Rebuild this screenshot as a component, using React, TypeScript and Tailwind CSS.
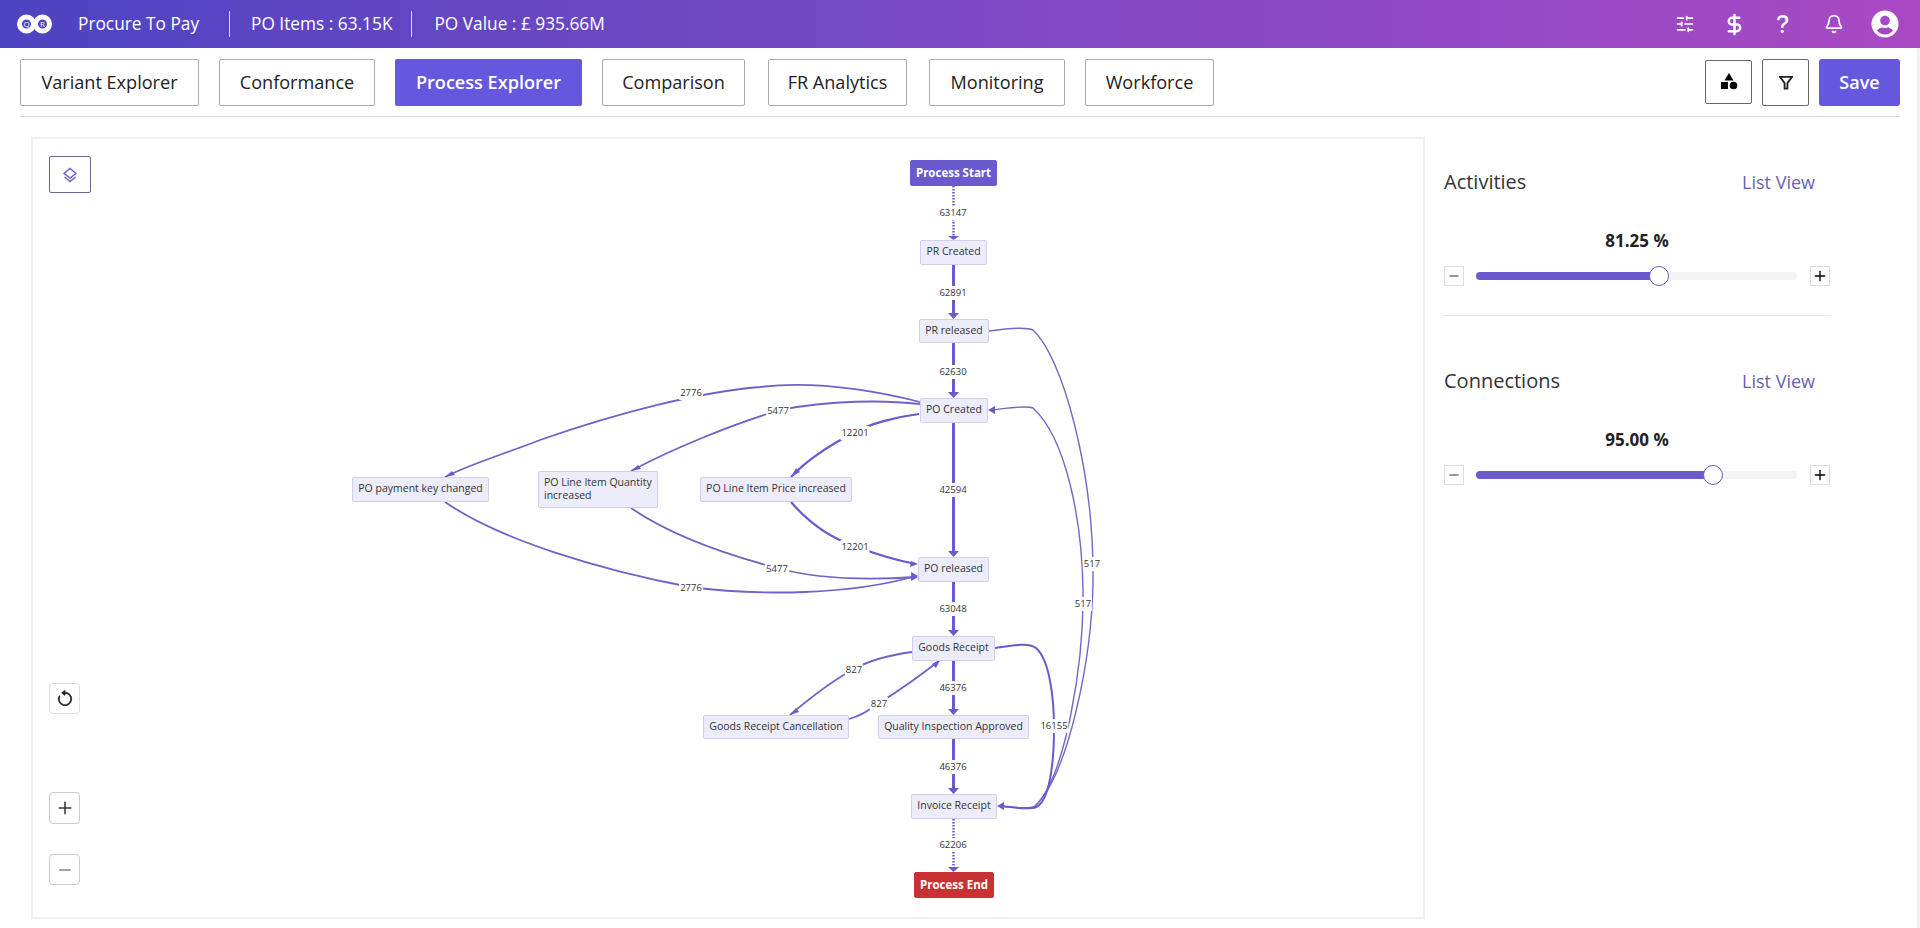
import { Plus, Minus, Bell, SlidersHorizontal, DollarSign } from "lucide-react";
import { FaUserCircle } from "react-icons/fa";
import { BsArrowCounterclockwise, BsQuestionLg } from "react-icons/bs";

const font = "font-['Open_Sans','Noto_Sans',sans-serif]";

const tabs = [
  { t: "Variant Explorer", c: "w-[179px]" },
  { t: "Conformance", c: "w-[156px]" },
  { t: "Process Explorer", c: "w-[187px]", active: true },
  { t: "Comparison", c: "w-[143px]" },
  { t: "FR Analytics", c: "w-[139px] ml-[3px]" },
  { t: "Monitoring", c: "w-[136px] ml-[2px]" },
  { t: "Workforce", c: "w-[129px]" },
];

const plain = "border-[#d0cfee] bg-[#ececfb] text-[#333] text-[10.5px]";
const nodes = [
  { t: "Process Start", c: "left-[877px] top-[21px] w-[87px] h-[26px] bg-[#6a5acd] border-[#6a5acd] text-white font-bold text-[11.5px]" },
  { t: "PR Created", c: `left-[887px] top-[101px] w-[67px] h-[25px] ${plain}` },
  { t: "PR released", c: `left-[886px] top-[180px] w-[70px] h-[24px] ${plain}` },
  { t: "PO Created", c: `left-[887px] top-[259px] w-[68px] h-[25px] ${plain}` },
  { t: "PO payment key changed", c: `left-[319px] top-[338px] w-[137px] h-[25px] ${plain}` },
  { t: "PO Line Item Quantity", t2: "increased", c: `left-[505px] top-[332px] w-[120px] h-[37px] leading-[13px] ${plain}` },
  { t: "PO Line Item Price increased", c: `left-[667px] top-[338px] w-[152px] h-[25px] ${plain}` },
  { t: "PO released", c: `left-[885px] top-[418px] w-[71px] h-[25px] ${plain}` },
  { t: "Goods Receipt", c: `left-[879px] top-[497px] w-[83px] h-[25px] ${plain}` },
  { t: "Goods Receipt Cancellation", c: `left-[670px] top-[576px] w-[146px] h-[24px] ${plain}` },
  { t: "Quality Inspection Approved", c: `left-[845px] top-[576px] w-[151px] h-[24px] ${plain}` },
  { t: "Invoice Receipt", c: `left-[878px] top-[655px] w-[86px] h-[25px] ${plain}` },
  { t: "Process End", c: "left-[881px] top-[733px] w-[80px] h-[26px] bg-[#c93232] border-[#c93232] text-white font-bold text-[11.5px]" },
];

const labels = [
  { t: "63147", c: "left-[920px] top-[74px]" },
  { t: "62891", c: "left-[920px] top-[154px]" },
  { t: "62630", c: "left-[920px] top-[233px]" },
  { t: "42594", c: "left-[920px] top-[351px]" },
  { t: "63048", c: "left-[920px] top-[470px]" },
  { t: "46376", c: "left-[920px] top-[549px]" },
  { t: "46376", c: "left-[920px] top-[628px]" },
  { t: "62206", c: "left-[920px] top-[706px]" },
  { t: "16155", c: "left-[1021px] top-[587px]" },
  { t: "517", c: "left-[1059px] top-[425px]" },
  { t: "517", c: "left-[1050px] top-[465px]" },
  { t: "827", c: "left-[821px] top-[531px]" },
  { t: "827", c: "left-[846px] top-[565px]" },
  { t: "2776", c: "left-[658px] top-[254px]" },
  { t: "2776", c: "left-[658px] top-[449px]" },
  { t: "5477", c: "left-[745px] top-[272px]" },
  { t: "5477", c: "left-[744px] top-[430px]" },
  { t: "12201", c: "left-[822px] top-[294px]" },
  { t: "12201", c: "left-[822px] top-[408px]" },
];

const edges = [
  { d: "M953.5 186V238", w: 2.5, dash: "1.5 1.5" },
  { d: "M953.5 265V317", w: 3 },
  { d: "M953.5 343V396", w: 3 },
  { d: "M953.5 423V555", w: 3 },
  { d: "M953.5 582V634", w: 3 },
  { d: "M953.5 661V713", w: 3 },
  { d: "M953.5 739V792", w: 3 },
  { d: "M953.5 819V870", w: 2.5, dash: "1.5 1.5" },
  { d: "M989 331C1003 329 1024 326 1033 330C1062 356 1094 470 1093 580C1092 660 1068 775 1035 806C1028 810 1012 807 999 806", w: 1.4, color: "#7468c4" },
  { d: "M1033 808C1066 780 1084 660 1083 590C1082 520 1066 438 1033 408C1024 405 1004 409 990 410", w: 1.4, color: "#7468c4" },
  { d: "M995 648C1010 646 1028 642 1036 648C1050 660 1054 700 1054 728C1054 770 1048 808 1032 808C1022 809 1010 807 999 806", w: 2 },
  { d: "M920 402C880 392 820 380 760 387C700 392 620 412 540 440C510 452 470 464 445 477", w: 1.8, color: "#6f62c8" },
  { d: "M920 404C885 400 830 400 780 410C730 425 670 450 631 471", w: 1.8, color: "#6f62c8" },
  { d: "M919 414C895 417 870 424 855 432C830 445 805 462 791 477", w: 2.2 },
  { d: "M445 502C500 540 600 570 690 587C760 596 850 595 916 576", w: 1.8, color: "#6f62c8" },
  { d: "M631 508C670 535 720 553 777 568C820 580 870 580 916 577", w: 1.8, color: "#6f62c8" },
  { d: "M791 502C810 524 830 538 855 546C875 554 895 560 916 564", w: 2.2 },
  { d: "M912 652C890 655 870 660 854 669C830 682 810 698 790 715", w: 1.8, color: "#6f62c8" },
  { d: "M849 719C860 716 870 710 879 703C900 690 920 676 940 660", w: 1.8, color: "#6f62c8" },
];

const arrows = [
  "M948 236L953.5 240L959 236Z",
  "M948 313L953.5 319L959 313Z",
  "M948 392L953.5 398L959 392Z",
  "M948 551L953.5 557L959 551Z",
  "M948 630L953.5 636L959 630Z",
  "M948 709L953.5 715L959 709Z",
  "M948 788L953.5 794L959 788Z",
  "M948 867L953.5 872L959 867Z",
  "M997 806L1004 802L1004 810Z",
  "M988 410L995 406L995 414Z",
  "M445 477L452 471L455 475Z",
  "M631 471L638 465L641 469Z",
  "M791 477L796 468L800 472Z",
  "M918 576L911 572L912 580Z",
  "M918 577L911 574L911 581Z",
  "M918 564L911 561L910 567Z",
  "M790 715L796 708L799 712Z",
  "M940 660L936 668L932 664Z",
];

function Node({ t, t2, c }: { t: string; t2?: string; c: string }) {
  return (
    <div className={`absolute flex items-center justify-center rounded-[2px] border pb-px ${c}`}>
      {t2 ? (
        <span className="w-[108px] text-left">
          {t}
          <br />
          {t2}
        </span>
      ) : (
        <span>{t}</span>
      )}
    </div>
  );
}

function Slider({ pct, thumb, fill }: { pct: string; thumb: string; fill: string }) {
  return (
    <>
      <div className="mt-[31px] text-center text-[17px] leading-[22px] font-bold text-[#222]">{pct}</div>
      <div className="mt-[14px] flex items-center">
        <button className="flex h-[20px] w-[20px] items-center justify-center border border-[#ddd] text-[#333]">
          <Minus size={14} strokeWidth={2} />
        </button>
        <div className="relative ml-[12px] h-[8px] w-[321px] rounded-full bg-[#f3f3f3]">
          <div className={`h-[8px] rounded-full bg-[#6a5acd] ${fill}`} />
          <div className={`absolute top-[-6px] h-[20px] w-[20px] rounded-full border border-[#6a5acd] bg-white ${thumb}`} />
        </div>
        <button className="ml-[13px] flex h-[20px] w-[20px] items-center justify-center border border-[#ddd] text-black">
          <Plus size={16} strokeWidth={2} />
        </button>
      </div>
    </>
  );
}

export default function App() {
  return (
    <div className={`relative h-[928px] w-[1920px] overflow-hidden bg-white text-[#222] ${font}`}>
      <header className="flex h-[48px] items-center bg-gradient-to-r from-[#4d43c2] to-[#a948c4] pl-[17px] pr-[21px] text-white">
        <svg width="35" height="20" viewBox="0 0 35 20">
          <circle cx="9.5" cy="10" r="7" fill="none" stroke="white" strokeWidth="5" />
          <circle cx="25.5" cy="10" r="7" fill="none" stroke="white" strokeWidth="5" />
          <text x="9.5" y="12.8" textAnchor="middle" fontSize="8" fill="white">Q</text>
          <text x="25.5" y="12.8" textAnchor="middle" fontSize="8" fill="white">R</text>
        </svg>
        <span className="ml-[26px] text-[17.3px]">Procure To Pay</span>
        <div className="ml-[30px] h-[26px] w-px bg-white/80" />
        <span className="ml-[21px] text-[17.3px]">PO Items : 63.15K</span>
        <div className="ml-[19px] h-[26px] w-px bg-white/80" />
        <span className="ml-[22px] text-[17.3px]">PO Value : £ 935.66M</span>
        <div className="ml-auto flex items-center">
          <SlidersHorizontal size={20} strokeWidth={2} className="mr-[28px]" />
          <DollarSign size={23} strokeWidth={2.6} className="mr-[25px]" />
          <BsQuestionLg size={24} className="mr-[29px]" />
          <Bell size={20} strokeWidth={2.2} className="mr-[27px]" />
          <FaUserCircle size={28} />
        </div>
      </header>

      <div className="mx-[20px] flex h-[69px] items-start border-b border-[#d9d9d9] pt-[11px]">
        <div className="flex gap-[20px]">
          {tabs.map((x) => (
            <button
              key={x.t}
              className={`flex h-[47px] items-center justify-center rounded-[2px] text-[18.1px] ${x.c} ${
                x.active ? "bg-[#6558de] font-semibold text-white" : "border border-[#aaa] bg-white text-[#222]"
              }`}
            >
              {x.t}
            </button>
          ))}
        </div>
        <div className="ml-auto flex items-center gap-[10px]">
          <button className="-mt-[2px] flex h-[44px] w-[47px] items-center justify-center rounded-[2px] border border-[#666]">
            <svg width="18" height="17" viewBox="0 0 18 17" fill="black">
              <path d="M9 0L13.5 7.5H4.5Z" />
              <rect x="1" y="9" width="7" height="7" />
              <circle cx="13.5" cy="12.5" r="3.8" />
            </svg>
          </button>
          <button className="flex h-[47px] w-[47px] items-center justify-center rounded-[2px] border border-[#666]">
            <svg width="14" height="15" viewBox="0 0 15 15" fill="none" stroke="#222" strokeWidth="2">
              <path d="M1 1.5H14L9 8V14H6V8Z" />
            </svg>
          </button>
          <button className="h-[47px] w-[81px] rounded-[3px] bg-[#6558de] text-[18px] font-semibold text-white">Save</button>
        </div>
      </div>

      <div className="flex pl-[31px] pt-[20px]">
        <div className="relative h-[782px] w-[1394px] border-2 border-[#f1f1f1]">
          <svg className="absolute inset-0 h-[778px] w-[1390px]" viewBox="33 139 1390 778" fill="none">
            {edges.map((e, i) => (
              <path key={i} d={e.d} stroke={e.color ?? "#6a5acd"} strokeWidth={e.w} strokeDasharray={e.dash} />
            ))}
            {arrows.map((d, i) => (
              <path key={i} d={d} fill="#6a5acd" />
            ))}
          </svg>
          {nodes.map((n) => (
            <Node key={n.t} t={n.t} t2={n.t2} c={n.c} />
          ))}
          {labels.map((l, i) => (
            <span
              key={i}
              className={`absolute -translate-x-1/2 -translate-y-1/2 bg-white px-px text-[9.5px] leading-[14px] text-[#333] ${l.c}`}
            >
              {l.t}
            </span>
          ))}

          <button className="absolute left-[16px] top-[17px] flex h-[37px] w-[42px] items-center justify-center rounded-[2px] border border-[#6a6890] text-[#6a5acd]">
            <svg width="16" height="16" viewBox="0 0 16 16" fill="none" stroke="currentColor" strokeWidth="1.4">
              <path d="M8 1.5L14 6.5L8 11L2 6.5Z" />
              <path d="M2.5 10L8 14.5L13.5 10" />
            </svg>
          </button>
          <button className="absolute left-[16px] top-[544px] flex h-[31px] w-[31px] items-center justify-center rounded-[4px] border border-[#ddd] text-[#222]">
            <BsArrowCounterclockwise size={18} strokeWidth={0.6} />
          </button>
          <button className="absolute left-[16px] top-[653px] flex h-[32px] w-[31px] items-center justify-center rounded-[4px] border border-[#ccc] text-[#333]">
            <Plus size={20} strokeWidth={1.8} />
          </button>
          <button className="absolute left-[16px] top-[715px] flex h-[31px] w-[31px] items-center justify-center rounded-[4px] border border-[#ccc] text-[#444]">
            <Minus size={18} strokeWidth={1.6} />
          </button>
        </div>

        <aside className="ml-[19px] w-[386px] pt-[28px]">
          <div className="flex items-center justify-between pr-[15px]">
            <span className="text-[20px] leading-[34px] text-[#333]">Activities</span>
            <span className="text-[18px] text-[#6a62b0]">List View</span>
          </div>
          <Slider pct="81.25 %" fill="w-[56.5%]" thumb="left-[173px]" />
          <div className="mt-[29px] h-px w-[389px] -translate-x-[2px] bg-[#e6e6e6]" />
          <div className="mt-[48px] flex items-center justify-between pr-[15px]">
            <span className="text-[20px] leading-[34px] text-[#333]">Connections</span>
            <span className="text-[18px] text-[#6a62b0]">List View</span>
          </div>
          <Slider pct="95.00 %" fill="w-[73%]" thumb="left-[227px]" />
        </aside>
      </div>
      <div className="absolute right-0 top-[48px] h-[880px] w-[3px] bg-[#f1f1f1]" />
    </div>
  );
}
